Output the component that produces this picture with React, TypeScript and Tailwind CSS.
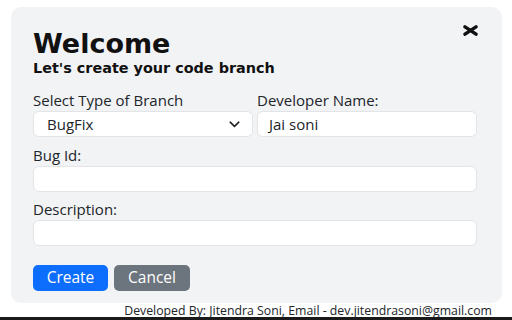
import React from "react";

export default function App() {
  const label = "block text-[15px] leading-[16px] text-[#212529] mb-[3px]";
  const input =
    "block w-full h-[26px] rounded-[6px] border border-[#e2e4e7] bg-white text-[15px] leading-[18px] text-[#212529] outline-none";
  return (
    <div
      className="w-[512px] h-[320px] bg-white flex flex-col overflow-hidden"
      style={{ fontFamily: '"Open Sans", "Noto Sans", sans-serif' }}
    >
      <div className="mx-[11px] mt-[7px] w-[491px] h-[298px] rounded-[10px] bg-[#f2f3f5] pl-[22px] pr-[25px] pt-[22px] relative">
        <button className="absolute right-[24px] top-[18px]">
          <svg width="15" height="11" viewBox="0 0 15 11" className="block">
            <path d="M2 1.8 L13 9.2 M13 1.8 L2 9.2" stroke="#111" strokeWidth="3.4" strokeLinecap="round" />
          </svg>
        </button>
        <h1
          className="text-[27px] leading-[30px] font-bold text-[#111]"
          style={{ fontFamily: '"DejaVu Sans", sans-serif' }}
        >
          Welcome
        </h1>
        <p
          className="text-[14.4px] leading-[16px] font-bold text-[#111] mt-[1px]"
          style={{ fontFamily: '"DejaVu Sans", sans-serif' }}
        >
          Let's create your code branch
        </p>
        <div className="flex gap-[4px] mt-[16px]">
          <div className="flex-1">
            <label className={label}>Select Type of Branch</label>
            <div className={input + " flex items-center justify-between pl-[13px] pr-[12px]"}>
              <span>BugFix</span>
              <svg width="11" height="7" viewBox="0 0 11 7" className="block">
                <path d="M1.2 1.2 L5.5 5.3 L9.8 1.2" stroke="#222" strokeWidth="1.6" fill="none" strokeLinecap="round" strokeLinejoin="round" />
              </svg>
            </div>
          </div>
          <div className="flex-1">
            <label className={label}>Developer Name:</label>
            <div className={input + " flex items-center pl-[11px]"}>Jai soni</div>
          </div>
        </div>
        <div className="mt-[10px]">
          <label className={label}>Bug Id:</label>
          <div className={input}></div>
        </div>
        <div className="mt-[9px]">
          <label className={label}>Description:</label>
          <div className={input}></div>
        </div>
        <div className="flex gap-[6px] mt-[19px]">
          <button className="h-[26px] w-[75px] rounded-[5px] bg-[#0d6efd] text-white text-[15.5px] leading-none">
            Create
          </button>
          <button className="h-[26px] w-[76px] rounded-[5px] bg-[#6c757d] text-white text-[15.5px] leading-none">
            Cancel
          </button>
        </div>
      </div>
      <div className="flex justify-end pr-[20px] mt-[1px] text-[12.3px] leading-[13px] text-[#212529]">
        Developed By: Jitendra Soni, Email - dev.jitendrasoni@gmail.com
      </div>
      <div className="mt-auto h-[3px] bg-[#1a1a1a]"></div>
    </div>
  );
}
